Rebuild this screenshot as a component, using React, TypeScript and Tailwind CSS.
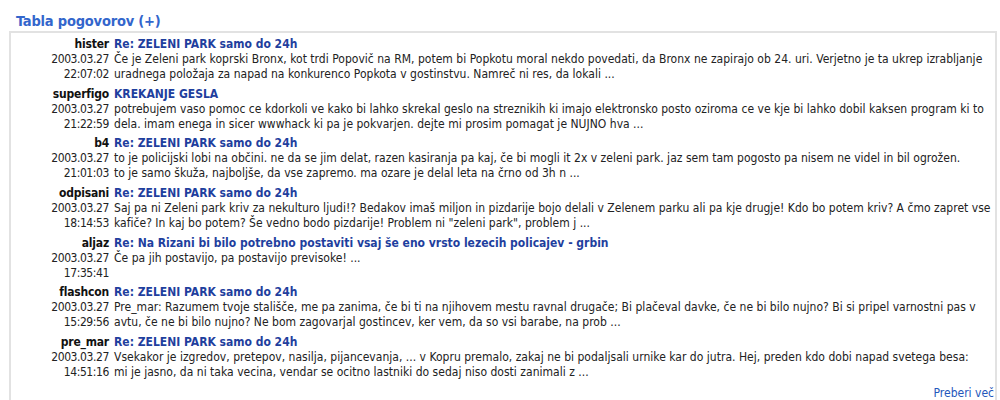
import React from 'react';

interface Post {
  user: string;
  subject: string;
  date: string;
  time: string;
  lines: string[];
}

const posts: Post[] = [
  {
    user: 'hister',
    subject: 'Re: ZELENI PARK samo do 24h',
    date: '2003.03.27',
    time: '22:07:02',
    lines: [
      'Če je Zeleni park koprski Bronx, kot trdi Popovič na RM, potem bi Popkotu moral nekdo povedati, da Bronx ne zapirajo ob 24. uri. Verjetno je ta ukrep izrabljanje',
      'uradnega položaja za napad na konkurenco Popkota v gostinstvu. Namreč ni res, da lokali ...',
    ],
  },
  {
    user: 'superfigo',
    subject: 'KREKANJE GESLA',
    date: '2003.03.27',
    time: '21:22:59',
    lines: [
      'potrebujem vaso pomoc ce kdorkoli ve kako bi lahko skrekal geslo na streznikih ki imajo elektronsko posto oziroma ce ve kje bi lahko dobil kaksen program ki to',
      'dela. imam enega in sicer wwwhack ki pa je pokvarjen. dejte mi prosim pomagat je NUJNO hva ...',
    ],
  },
  {
    user: 'b4',
    subject: 'Re: ZELENI PARK samo do 24h',
    date: '2003.03.27',
    time: '21:01:03',
    lines: [
      'to je policijski lobi na občini. ne da se jim delat, razen kasiranja pa kaj, če bi mogli it 2x v zeleni park. jaz sem tam pogosto pa nisem ne videl in bil ogrožen.',
      'to je samo škuža, najboljše, da vse zapremo. ma ozare je delal leta na črno od 3h n ...',
    ],
  },
  {
    user: 'odpisani',
    subject: 'Re: ZELENI PARK samo do 24h',
    date: '2003.03.27',
    time: '18:14:53',
    lines: [
      'Saj pa ni Zeleni park kriv za nekulturo ljudi!? Bedakov imaš miljon in pizdarije bojo delali v Zelenem parku ali pa kje drugje! Kdo bo potem kriv? A čmo zapret vse',
      'kafiče? In kaj bo potem? Še vedno bodo pizdarije! Problem ni "zeleni park", problem j ...',
    ],
  },
  {
    user: 'aljaz',
    subject: 'Re: Na Rizani bi bilo potrebno postaviti vsaj še eno vrsto lezecih policajev - grbin',
    date: '2003.03.27',
    time: '17:35:41',
    lines: ['Če pa jih postavijo, pa postavijo previsoke! ...'],
  },
  {
    user: 'flashcon',
    subject: 'Re: ZELENI PARK samo do 24h',
    date: '2003.03.27',
    time: '15:29:56',
    lines: [
      'Pre_mar: Razumem tvoje stališče, me pa zanima, če bi ti na njihovem mestu ravnal drugače; Bi plačeval davke, če ne bi bilo nujno? Bi si pripel varnostni pas v',
      'avtu, če ne bi bilo nujno? Ne bom zagovarjal gostincev, ker vem, da so vsi barabe, na prob ...',
    ],
  },
  {
    user: 'pre_mar',
    subject: 'Re: ZELENI PARK samo do 24h',
    date: '2003.03.27',
    time: '14:51:16',
    lines: [
      'Vsekakor je izgredov, pretepov, nasilja, pijancevanja, ... v Kopru premalo, zakaj ne bi podaljsali urnike kar do jutra. Hej, preden kdo dobi napad svetega besa:',
      'mi je jasno, da ni taka vecina, vendar se ocitno lastniki do sedaj niso dosti zanimali z ...',
    ],
  },
];

const PostRow: React.FC<{ post: Post }> = ({ post }) => (
  <div className="grid grid-cols-[96px_1fr] gap-x-[5px] pb-[4.7px]">
    <div className="text-right font-bold text-[#111] leading-[15px] tracking-[-0.2px]">{post.user}</div>
    <a href="#" className="font-bold text-[#1f3f9e] leading-[15px] whitespace-nowrap">
      {post.subject}
    </a>
    <div className="text-right text-[#222] leading-[15px] tracking-[-0.4px]">
      {post.date}
      <br />
      {post.time}
    </div>
    <div className="text-[#222] leading-[15px] whitespace-nowrap tracking-[0.02px]">
      {post.lines.map((l, i) => (
        <div key={i}>{l}</div>
      ))}
    </div>
  </div>
);

export default function App() {
  return (
    <div
      className="w-[1000px] h-[400px] overflow-hidden bg-white text-[12px]"
      style={{ fontFamily: '"DejaVu Sans Condensed", Tahoma, "DejaVu Sans", sans-serif' }}
    >
      <div className="pl-[16px] pt-[12px] h-[31px]">
        <a href="#" className="text-[14.5px] font-bold text-[#3366cc] leading-[19px] tracking-[-0.2px]">
          Tabla pogovorov (+)
        </a>
      </div>
      <div className="ml-[9px] mr-[3px] border-2 border-[#e2e2e2] pt-[4px] pl-[2px] h-[420px]">
        {posts.map((p) => (
          <PostRow key={p.user} post={p} />
        ))}
        <div className="text-right pr-[1px] -mt-[1px]">
          <a href="#" className="text-[#2457bb] leading-[15px]">Preberi več</a>
        </div>
      </div>
    </div>
  );
}
